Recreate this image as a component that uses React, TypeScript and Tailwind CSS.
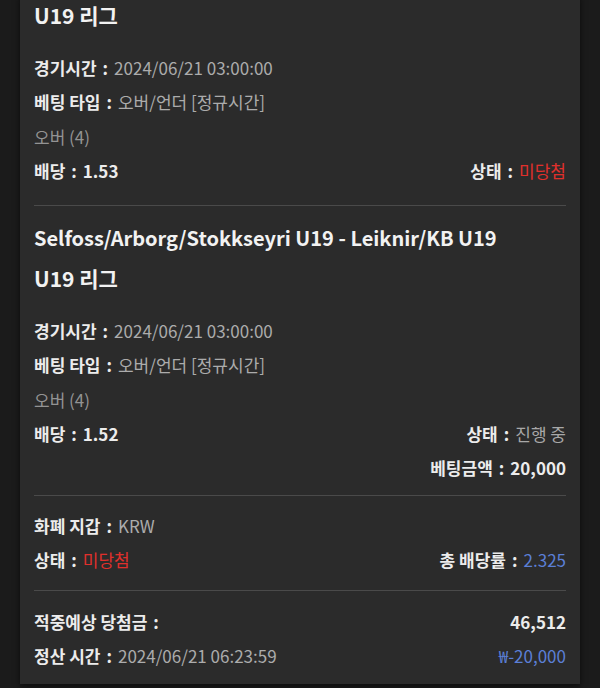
const FONT = { fontFamily: '"Noto Sans CJK KR", "Noto Sans", sans-serif' };

type Bet = {
  title?: string;
  league: string;
  time: string;
  type: string;
  pick: string;
  odds: string;
  status: string;
  statusColor: string;
};

const bets: Bet[] = [
  {
    league: 'U19 리그',
    time: '2024/06/21 03:00:00',
    type: '오버/언더 [정규시간]',
    pick: '오버 (4)',
    odds: '1.53',
    status: '미당첨',
    statusColor: 'text-[#e0302c]',
  },
  {
    title: 'Selfoss/Arborg/Stokkseyri U19 - Leiknir/KB U19',
    league: 'U19 리그',
    time: '2024/06/21 03:00:00',
    type: '오버/언더 [정규시간]',
    pick: '오버 (4)',
    odds: '1.52',
    status: '진행 중',
    statusColor: 'text-[#a8a8a8]',
  },
];

const Field = ({ label, value, valueClass = 'text-[#acacac]' }: { label: string; value: string; valueClass?: string }) => (
  <span>
    <span className="font-bold text-[#ececec]">{label}</span>
    <span className="mx-[6px] font-bold text-[#ececec]">:</span>
    <span className={valueClass}>{value}</span>
  </span>
);

const Row = ({ children }: { children: React.ReactNode }) => (
  <div className="flex h-[34.5px] items-center justify-between">{children}</div>
);

const BetItem = ({ bet, first }: { bet: Bet; first: boolean }) => (
  <div className={first ? '' : 'pt-[12px]'}>
    {bet.title && <div className="text-[20px] leading-[40px] font-bold text-[#f2f2f2]">{bet.title}</div>}
    <div className="text-[21px] leading-[40px] font-bold text-[#f2f2f2]">{bet.league}</div>
    <div className="mt-[15px]">
      <Row>
        <Field label="경기시간" value={bet.time} />
      </Row>
      <Row>
        <Field label="베팅 타입" value={bet.type} />
      </Row>
      <Row>
        <span className="text-[#939393]">{bet.pick}</span>
      </Row>
      <Row>
        <Field label="배당" value={bet.odds} valueClass="font-bold text-[#ececec]" />
        <Field label="상태" value={bet.status} valueClass={bet.statusColor} />
      </Row>
    </div>
  </div>
);

export default function App() {
  return (
    <div className="min-h-[688px] overflow-hidden bg-[#1b1b1b]" style={FONT}>
      <div className="mx-[20px] mt-[-5px] bg-[#2b2b2b] px-[14px] pb-[11px] text-[17px] shadow-[0_2px_6px_rgba(0,0,0,0.6)]">
        <div className="pb-[17px]">
          <BetItem bet={bets[0]} first />
        </div>
        <div className="h-px bg-[#4a4a4a]" />
        <BetItem bet={bets[1]} first={false} />
        <div className="flex h-[34px] items-center justify-end">
          <Field label="베팅금액" value="20,000" valueClass="font-bold text-[#ececec]" />
        </div>
        <div className="mt-[10px] h-px bg-[#4a4a4a]" />
        <div className="pt-[12px] pb-[13px]">
          <Row>
            <Field label="화폐 지갑" value="KRW" />
          </Row>
          <Row>
            <Field label="상태" value="미당첨" valueClass="text-[#e0302c]" />
            <Field label="총 배당률" value="2.325" valueClass="text-[#5b7fd6]" />
          </Row>
        </div>
        <div className="h-px bg-[#4a4a4a]" />
        <div className="pt-[13px]">
          <Row>
            <span className="font-bold text-[#ececec]">
              적중예상 당첨금<span className="mx-[6px]">:</span>
            </span>
            <span className="font-bold text-[#ececec]">46,512</span>
          </Row>
          <Row>
            <Field label="정산 시간" value="2024/06/21 06:23:59" />
            <span className="text-[#5b7fd6]">₩-20,000</span>
          </Row>
        </div>
      </div>
    </div>
  );
}
